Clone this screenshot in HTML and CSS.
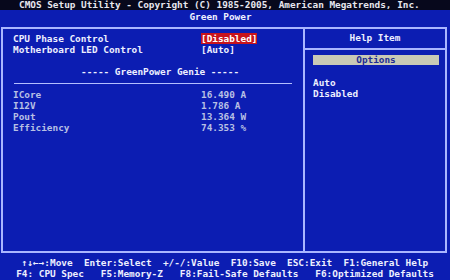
FILE: index.html
```html
<!DOCTYPE html>
<html>
<head>
<meta charset="utf-8">
<link rel="stylesheet" href="styles.css">
</head>
<body>
<div class="screen">
  <div class="top">CMOS Setup Utility - Copyright (C) 1985-2005, American Megatrends, Inc.</div>
  <div class="sub">Green Power</div>
  <div class="frame">
    <div class="left">
      <div class="rows">
        <span class="lbl">CPU Phase Control</span><span class="val"><span class="sel">[Disabled]</span></span>
        <span class="lbl">Motherboard LED Control</span><span class="val">[Auto]</span>
      </div>
      <div class="genie">----- GreenPower Genie -----</div>
      <div class="rule"></div>
      <div class="rows dim">
        <span>ICore</span><span>16.490 A</span>
        <span>I12V</span><span>1.786 A</span>
        <span>Pout</span><span>13.364 W</span>
        <span>Efficiency</span><span>74.353 %</span>
      </div>
    </div>
    <div class="right">
      <div class="help">Help Item</div>
      <div class="opts">Options</div>
      <div class="list">
        <div>Auto</div>
        <div>Disabled</div>
      </div>
    </div>
  </div>
  <div class="foot">
    <div class="fl">↑↓←→:Move  Enter:Select  +/-/:Value  F10:Save  ESC:Exit  F1:General Help</div>
    <div class="fl">F4: CPU Spec   F5:Memory-Z   F8:Fail-Safe Defaults   F6:Optimized Defaults</div>
  </div>
</div>
</body>
</html>
```
FILE: styles.css
```css
html, body {
  margin: 0;
  padding: 0;
}
body {
  width: 450px;
  height: 280px;
  overflow: hidden;
  background: #0c1db2;
}
.screen {
  width: 450px;
  height: 280px;
  display: flex;
  flex-direction: column;
  font-family: "DejaVu Sans Mono", "Liberation Mono", monospace;
  font-weight: bold;
  font-size: 9.4px;
  color: #eef0ff;
  white-space: nowrap;
}
.top {
  height: 10px;
  flex: none;
  line-height: 10px;
  background: #07081c;
  color: #e6e6ee;
  padding-left: 19px;
}
.sub {
  height: 17px;
  flex: none;
  line-height: 13px;
  text-align: center;
  padding-right: 9px;
  box-sizing: border-box;
}
.frame {
  flex: none;
  margin: 0 3px 0 1px;
  height: 226px;
  box-sizing: border-box;
  border: 2px solid #aab6ff;
  display: grid;
  grid-template-columns: 302px 1fr;
}
.left {
  border-right: 2px solid #aab6ff;
  padding: 4px 0 0 10px;
}
.rows {
  display: grid;
  grid-template-columns: 188px auto;
  line-height: 11px;
}
.val {
  display: flex;
}
.sel {
  background: #c8141c;
  color: #ffffff;
}
.genie {
  margin-top: 11px;
  line-height: 11px;
  padding-left: 68px;
  white-space: pre;
}
.rule {
  margin: 6px 0 5px 1px;
  width: 278px;
  height: 1px;
  background: #b4beff;
}
.dim {
  color: #b8c0e4;
}
.right {
  display: flex;
  flex-direction: column;
}
.help {
  height: 19px;
  line-height: 17px;
  text-align: center;
  border-bottom: 2px solid #aab6ff;
}
.opts {
  margin: 5px 6px 0 8px;
  height: 10px;
  line-height: 10px;
  background: #c9c9b6;
  color: #1d2c94;
  text-align: center;
}
.list {
  margin-top: 12px;
  padding-left: 8px;
  line-height: 11px;
}
.foot {
  flex: 1;
  padding-top: 5px;
  text-align: center;
  line-height: 10.5px;
}
.fl {
  white-space: pre;
}
```
